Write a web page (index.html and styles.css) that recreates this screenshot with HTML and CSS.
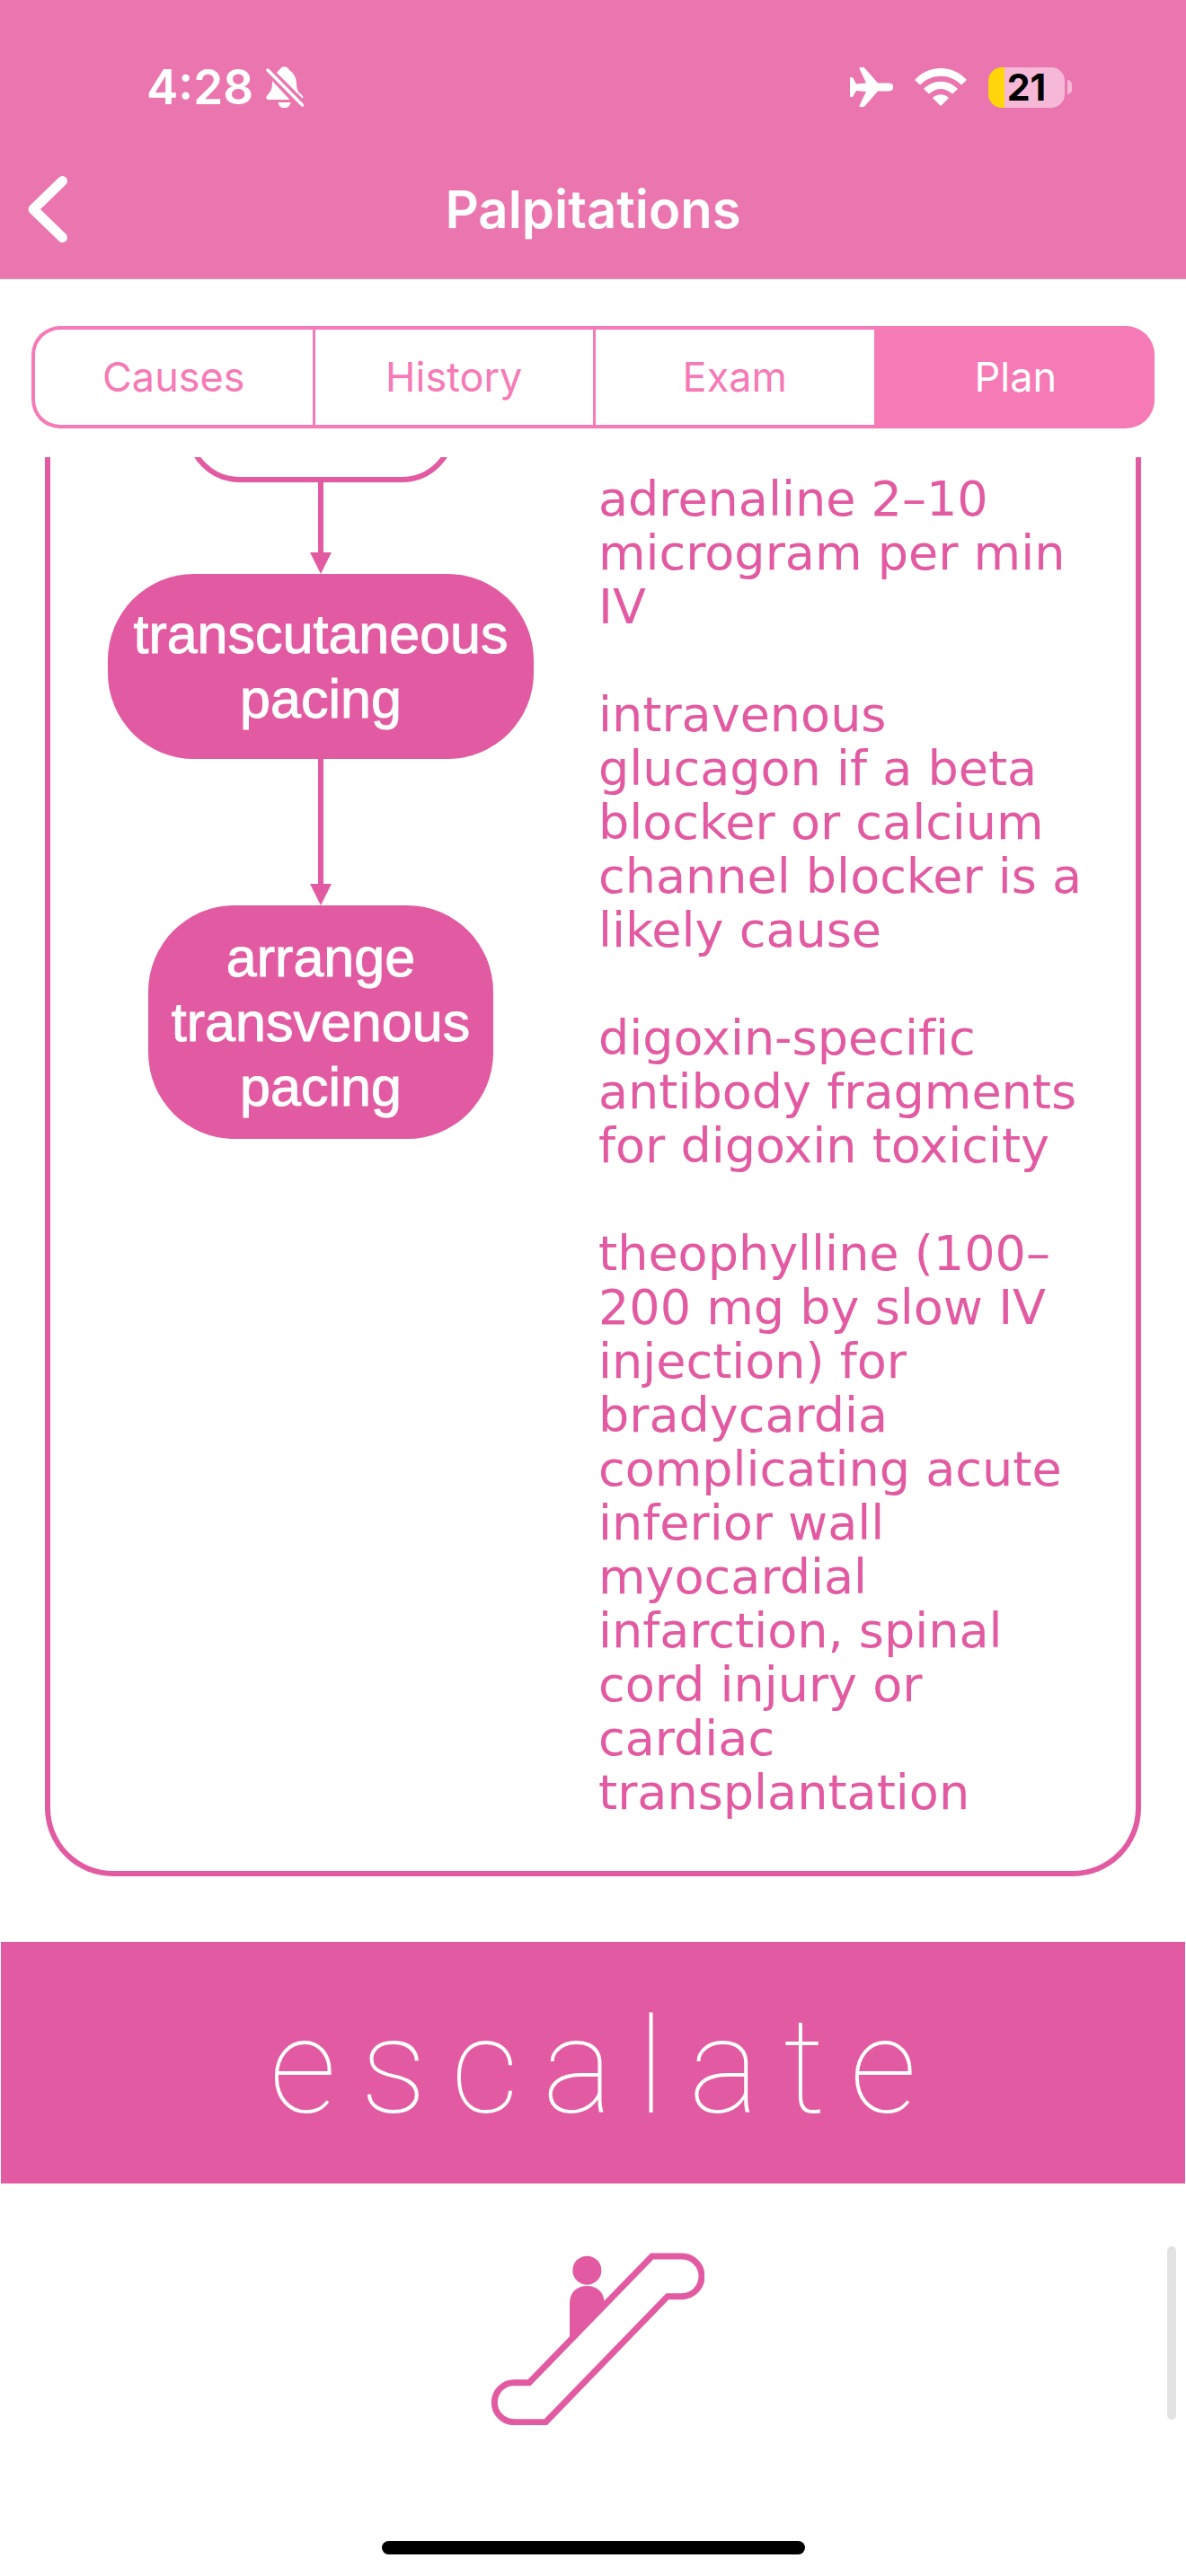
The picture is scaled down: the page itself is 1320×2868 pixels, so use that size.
FILE: index.html
```html
<!DOCTYPE html>
<html lang="en">
<head>
<meta charset="utf-8">
<meta name="viewport" content="width=device-width, initial-scale=1">
<title>Palpitations</title>
<link rel="stylesheet" href="styles.css">
</head>
<body>
<div class="screen">
  <header class="header">
    <div class="status">
      <div class="status-left">
        <span class="clock">4:28</span>
        <svg class="bell" viewBox="0 0 42 46" aria-hidden="true">
          <path d="M12 7 C14 4 15.500 3.500 16 2.500 C18 -.5 23 -.5 25 2.500 C26 5 33 7 34 18 C34 27 36 28 40 32 C42 34 41.500 35 40.500 35.500 Z M7 16 L26.500 37 H3 C0 37 -.5 34 1.500 32 C5 28 7 27 7 16 Z M13.500 40 H27.500 C27 44 24 46.500 20.500 46.500 C17 46.500 14 44 13.500 40 Z" fill="currentColor"/>
          <path d="M2 4 L40.500 43" stroke="currentColor" stroke-width="3.500" stroke-linecap="round"/>
        </svg>
      </div>
      <div class="status-right">
        <svg class="plane" viewBox="0 0 48 44" aria-hidden="true">
          <path d="M43 17.500 C46.500 17.500 48.500 19.500 48.500 22 C48.500 24.500 46.500 26.500 43 26.500 H31 L17 42.500 C16 43.700 15.500 44 14 44 H12 C10.500 44 10.300 43.500 10.800 42 L18 27 L7 26 L3.500 32 C3 33 2 33 1 33 C.3 33 0 32.500 0 32 V12 C0 11.500 .3 11 1 11 C2 11 3 11 3.500 12 L7 18.500 L18 17.500 L10.800 2 C10.300 .5 10.500 0 12 0 H14 C15.500 0 16 .3 17 1.500 L31 17.500 Z" fill="currentColor"/>
        </svg>
        <svg class="wifi" viewBox="0 0 58 42" aria-hidden="true">
          <path d="M0 13 C16 -4.300 42 -4.300 58 13 L52 18.500 C39 5.500 19 5.500 6 18.500 Z M10 23 C21 12 37 12 48 23 L42 28.500 C34 21 24 21 16 28.500 Z M20 33 C25 28 33 28 38 33 L29 42 Z" fill="currentColor"/>
        </svg>
        <div class="battery"><span class="battery-body">21</span><span class="battery-cap"></span></div>
      </div>
    </div>
    <div class="navbar">
      <button class="back" type="button" aria-label="Back">
        <svg class="chevron" viewBox="0 0 44 74" aria-hidden="true"><path d="M38.500 5.500 L6 37 L38.500 68.500" fill="none" stroke="currentColor" stroke-width="11" stroke-linecap="round" stroke-linejoin="round"/></svg>
      </button>
      <h1 class="title">Palpitations</h1>
    </div>
  </header>

  <nav class="tabs">
    <button class="tab" type="button">Causes</button>
    <button class="tab" type="button">History</button>
    <button class="tab" type="button">Exam</button>
    <button class="tab tab-active" type="button" aria-current="page">Plan</button>
  </nav>

  <main class="content">
    <section class="card">
      <div class="flow">
        <div class="step-outline"></div>
        <svg class="arrow" viewBox="0 0 24 102" aria-hidden="true"><path d="M12 0 V80" stroke="currentColor" stroke-width="6"/><path d="M0 78 H24 L12 102 Z" fill="currentColor"/></svg>
        <div class="step step-wide">transcutaneous<br>pacing</div>
        <svg class="arrow arrow-long" viewBox="0 0 24 163" aria-hidden="true"><path d="M12 0 V142" stroke="currentColor" stroke-width="6"/><path d="M0 139 H24 L12 163 Z" fill="currentColor"/></svg>
        <div class="step">arrange<br>transvenous<br>pacing</div>
      </div>
      <div class="notes">
        <p class="note">adrenaline 2–10<br>microgram per min<br>IV</p>
        <p class="note">intravenous<br>glucagon if a beta<br>blocker or calcium<br>channel blocker is a<br>likely cause</p>
        <p class="note">digoxin-specific<br>antibody fragments<br>for digoxin toxicity</p>
        <p class="note">theophylline (100–<br>200 mg by slow IV<br>injection) for<br>bradycardia<br>complicating acute<br>inferior wall<br>myocardial<br>infarction, spinal<br>cord injury or<br>cardiac<br>transplantation</p>
      </div>
    </section>

    <h2 class="banner">escalate</h2>

    <svg class="escalator" viewBox="109 144 744 576" role="img" aria-label="Person on an escalator">
      <circle cx="461" cy="203" r="48" fill="currentColor"/>
      <path d="M403 440 V312 C403 275 430 255 461 255 C492 255 519 275 519 312 V325 Z" fill="currentColor"/>
      <path d="M678 156 H777 A66 66 0 0 1 777 290 H730 L323 710 H218 A66 66 0 0 1 218 578 H268 Z" fill="#fff" stroke="currentColor" stroke-width="21"/>
    </svg>
    <div class="scrollbar"></div>
  </main>

  <footer class="home"><span class="home-bar"></span></footer>
</div>
</body>
</html>
```
FILE: styles.css
```css
:root {
  --header: #eb75af;
  --tab: #f57ab6;
  --pink: #e25aa1;
}

* { box-sizing: border-box; }

body {
  margin: 0;
  background: #fff;
  font-family: Inter, "Liberation Sans", sans-serif;
}

.screen {
  display: flex;
  flex-direction: column;
  min-height: 100vh;
}

.header {
  background: var(--header);
  border-bottom: 1px solid #c3a9b6;
  color: #fff;
}

.status {
  display: flex;
  justify-content: space-between;
  align-items: center;
  height: 156px;
  padding: 38px 127px 0 163px;
}

.status-left,
.status-right {
  display: flex;
  align-items: center;
}

.status-left { gap: 14px; }
.status-right { gap: 24px; }

.clock {
  font-size: 53px;
  font-weight: 600;
  line-height: 60px;
}

.bell { width: 42px; height: 46px; }
.plane { width: 48px; height: 44px; }
.wifi { width: 58px; height: 42px; }

.battery {
  display: flex;
  align-items: center;
  gap: 3px;
}

.battery-body {
  width: 85px;
  height: 45px;
  border-radius: 15px;
  background: linear-gradient(to right, #ffd60a 18px, #f5b9d7 18px);
  color: #000;
  font-size: 41px;
  font-weight: 700;
  line-height: 45px;
  text-align: center;
}

.battery-cap {
  width: 5px;
  height: 16px;
  border-radius: 0 5px 5px 0;
  background: #f5b9d7;
}

.navbar {
  display: grid;
  grid-template-columns: 105px 1fr 105px;
  align-items: center;
  height: 154px;
}

.back {
  display: flex;
  padding: 0 0 0 31px;
  border: 0;
  background: none;
  color: inherit;
}

.chevron { width: 44px; height: 74px; }

.title {
  margin: 0;
  font-size: 58px;
  font-weight: 600;
  line-height: 72px;
  text-align: center;
}

.tabs {
  display: grid;
  grid-template-columns: repeat(4, 1fr);
  height: 114px;
  margin: 52px 35px 32px;
}

.tab {
  padding: 0;
  border: solid var(--tab);
  border-width: 4px 0 4px 3px;
  background: #fff;
  color: var(--tab);
  font: 400 45px/60px Inter, "Liberation Sans", sans-serif;
}

.tab:first-child {
  border-left-width: 4px;
  border-radius: 32px 0 0 32px;
}

.tab:last-child { border-radius: 0 32px 32px 0; }

.tab-active {
  background: var(--tab);
  color: #fff;
}

.content {
  position: relative;
  flex: 1;
  color: var(--pink);
}

.card {
  display: grid;
  grid-template-columns: 602px 1fr;
  margin: 0 50px;
  padding: 0 0 57px;
  overflow: hidden;
  border: 6px solid var(--pink);
  border-top: 0;
  border-radius: 0 0 76px 76px;
}

.flow {
  display: flex;
  flex-direction: column;
  align-items: center;
}

/* Upper part is scrolled out of view */
.step-outline {
  width: 300px;
  height: 128px;
  margin-top: -100px;
  border: 6px solid var(--pink);
  border-radius: 60px;
}

.arrow { width: 24px; height: 102px; }
.arrow-long { height: 163px; }

.step {
  padding: 22px 26px;
  border-radius: 96px;
  background: var(--pink);
  color: #fff;
  font-family: "Liberation Sans", sans-serif;
  font-size: 61px;
  line-height: 72px;
  text-align: center;
  -webkit-text-stroke: 1px #fff;
}

.step-wide { padding: 31px 28px; }

.notes {
  padding: 17px 0 0 8px;
  font-family: Chalkduster, "DejaVu Sans", sans-serif;
  font-size: 54px;
  font-variant-ligatures: none;
  line-height: 60px;
  white-space: nowrap;
}

.note { margin: 0 0 60px; }
.note:last-child { margin-bottom: 0; }

.banner {
  margin: 73px 1px 0;
  padding: 50px 0 39px 27px;
  background: var(--pink);
  color: #fff;
  font-family: Roboto, Inter, sans-serif;
  font-size: 148px;
  font-weight: 100;
  line-height: 180px;
  letter-spacing: 27px;
  text-align: center;
}

.escalator {
  display: block;
  width: 248px;
  height: 192px;
  margin: 77px auto 0;
}

.scrollbar {
  position: absolute;
  right: 11px;
  bottom: 135px;
  width: 10px;
  height: 193px;
  border-radius: 5px;
  background: #e3e3e3;
}

.home {
  display: flex;
  justify-content: center;
  padding: 0 0 24px;
}

.home-bar {
  width: 471px;
  height: 15px;
  border-radius: 8px;
  background: #000;
}
```
